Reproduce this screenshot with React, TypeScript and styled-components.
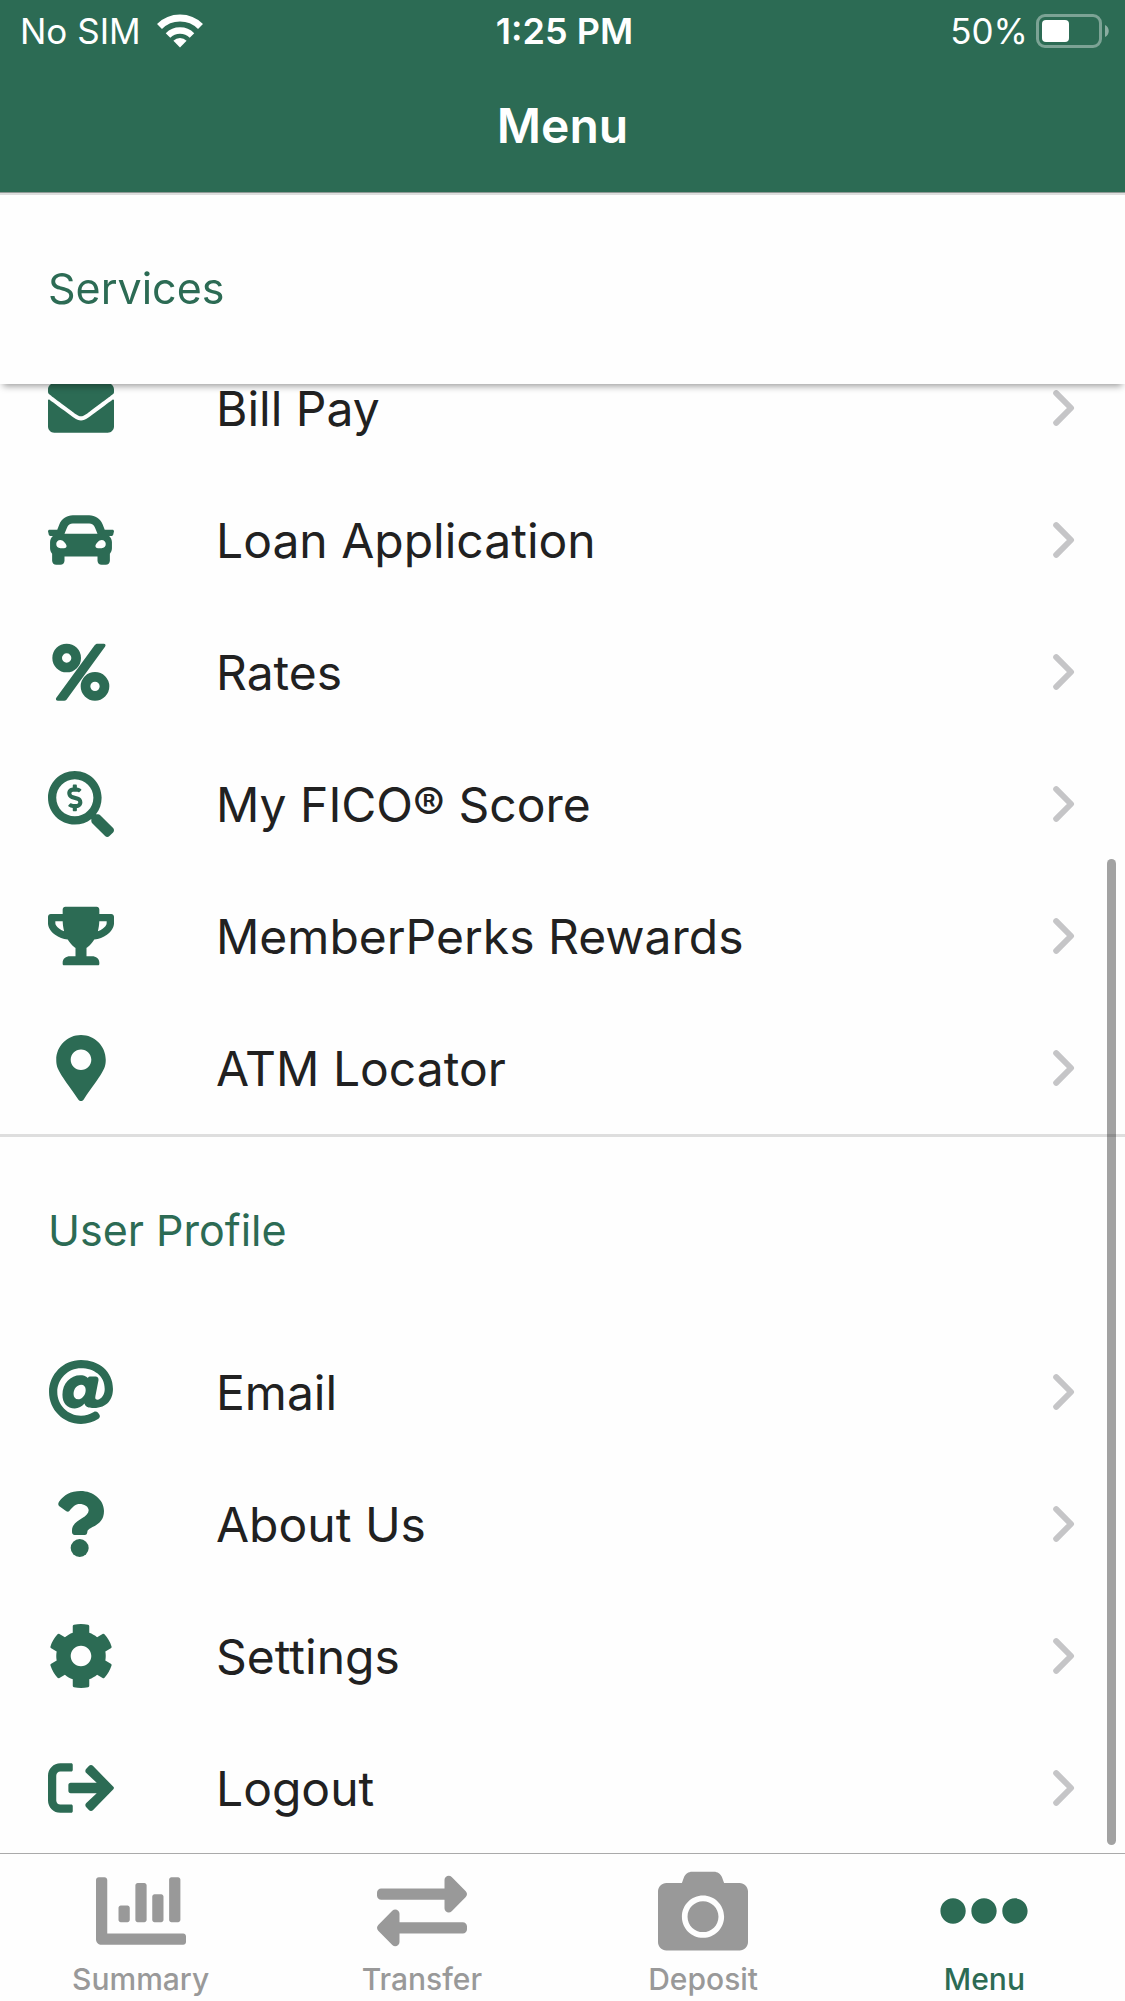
import React from 'react';
import styled, { createGlobalStyle } from 'styled-components';
import type { IconType } from 'react-icons';
import {
  FaAt,
  FaCamera,
  FaCar,
  FaChartBar,
  FaCog,
  FaEllipsisH,
  FaEnvelope,
  FaExchangeAlt,
  FaMapMarkerAlt,
  FaSearchDollar,
  FaTrophy,
} from 'react-icons/fa';

const green = '#2c6b54';
const ink = '#212121';
const paper = '#fefefe';
const muted = '#999999';

const GlobalStyle = createGlobalStyle`
  * { box-sizing: border-box; }
  body {
    margin: 0;
    background: ${paper};
    color: ${ink};
    font-family: Inter, "Liberation Sans", sans-serif;
  }
`;

const Screen = styled.div`
  display: flex;
  flex-direction: column;
  height: 100vh;
  overflow: hidden;
`;

const Header = styled.header`
  flex: none;
  background: ${green};
  color: #fff;
  border-bottom: 1px solid #8f9a96;
`;

const StatusBar = styled.div`
  display: grid;
  grid-template-columns: 1fr auto 1fr;
  align-items: center;
  height: 60px;
  padding: 0 16px 0 20px;
  font-size: 35px;
  line-height: 62px;
`;

const Carrier = styled.div`
  display: flex;
  align-items: center;
  gap: 16px;
`;

const Clock = styled.time`
  font-size: 36px;
  font-weight: 600;
`;

const Power = styled.div`
  display: flex;
  align-items: center;
  justify-content: flex-end;
  gap: 8px;
`;

const Title = styled.h1`
  margin: 0;
  height: 132px;
  font-size: 48px;
  line-height: 132px;
  font-weight: 600;
  text-align: center;
`;

const Content = styled.main`
  position: relative;
  flex: 1;
  min-height: 0;
  overflow: hidden;
  border-top: 2px solid #dddddd;
`;

const SectionTitle = styled.h2<{ $pinned?: boolean }>`
  position: ${(p) => (p.$pinned ? 'sticky' : 'static')};
  top: 0;
  z-index: 1;
  margin: 0;
  padding: 0 48px 2px;
  background: ${paper};
  color: ${green};
  font-size: 43px;
  font-weight: 400;
  line-height: 187px;
  box-shadow: ${(p) => (p.$pinned ? '0 5px 7px -3px rgba(0, 0, 0, 0.4)' : 'none')};
`;

const List = styled.ul<{ $scrolled?: boolean }>`
  margin: ${(p) => (p.$scrolled ? '-42px 0 0' : '0')};
  padding: 0;
  list-style: none;
`;

const Section = styled.section`
  & + & {
    border-top: 3px solid #dedede;
  }
`;

const Row = styled.a`
  display: flex;
  align-items: center;
  gap: 102px;
  height: 132px;
  padding: 0 50px 0 48px;
  color: inherit;
  font-size: 48px;
  line-height: 60px;
  text-decoration: none;
`;

const IconSlot = styled.span`
  display: flex;
  flex: none;
  justify-content: center;
  width: 66px;
  color: ${green};
`;

const RowLabel = styled.span`
  flex: 1;
  padding-top: 2px;
`;

const ScrollThumb = styled.div`
  position: absolute;
  right: 9px;
  bottom: 8px;
  z-index: 2;
  width: 9px;
  height: 59.5%;
  border-radius: 5px;
  background: rgba(0, 0, 0, 0.36);
`;

const TabBar = styled.nav`
  display: grid;
  flex: none;
  grid-template-columns: repeat(4, 1fr);
  height: 148px;
  border-top: 1px solid #aaaaaa;
`;

const Tab = styled.a<{ $active?: boolean }>`
  display: flex;
  flex-direction: column;
  align-items: center;
  padding-top: 12px;
  color: ${(p) => (p.$active ? green : muted)};
  font-size: 30px;
  font-weight: 500;
  line-height: 46px;
  text-decoration: none;
`;

const WifiGlyph = () => (
  <svg width="46" height="34" viewBox="0 0 46 34" fill="none" aria-hidden="true">
    <path d="M2.5 12.5a29 29 0 0 1 41 0" stroke="#fff" strokeWidth="7" />
    <path d="M11 21.5a17 17 0 0 1 24 0" stroke="#fff" strokeWidth="6.4" />
    <path d="M23 33.5l-6.6-6.8a9.4 9.4 0 0 1 13.2 0z" fill="#fff" />
  </svg>
);

const BatteryGlyph = () => (
  <svg width="73" height="34" viewBox="0 0 73 34" fill="none" aria-hidden="true">
    <rect x="1.5" y="1.5" width="63" height="31" rx="7.5" stroke="#fff" strokeOpacity="0.38" strokeWidth="3" />
    <rect x="6" y="6" width="27" height="22" rx="4" fill="#fff" />
    <path d="M69 11c5 2 5 10 0 12z" fill="#fff" fillOpacity="0.45" />
  </svg>
);

const ChevronGlyph = () => (
  <svg width="22" height="36" viewBox="0 0 22 36" fill="none" aria-hidden="true">
    <path d="M3.2 3.2L18 18L3.2 32.8" stroke="#c5c5c7" strokeWidth="6" strokeLinecap="round" strokeLinejoin="round" />
  </svg>
);

type GlyphProps = { size?: number | string };

const PercentGlyph = ({ size = 66 }: GlyphProps) => (
  <svg width={size} height={size} viewBox="0 0 198 198" fill="none" aria-hidden="true">
    <circle cx="56" cy="57" r="28.5" stroke="currentColor" strokeWidth="29" />
    <circle cx="141" cy="142" r="28.5" stroke="currentColor" strokeWidth="29" />
    <path d="M149 14h18c6 0 7 5 4 9L57 180c-2 3-4 5-8 5H30c-6 0-8-5-5-9L140 19c2-3 5-5 9-5z" fill="currentColor" />
  </svg>
);

const QuestionGlyph = ({ size = 66 }: GlyphProps) => (
  <svg width={size} height={size} viewBox="0 0 198 198" fill="currentColor" aria-hidden="true">
    <path d="M33 32C48 12 68 0 98 0c37 0 70 26 70 60 0 47-48 46-50 62 0 6-3 10-8 10H80c-5 0-8-4-8-9v-5c0-31 50-36 50-60 0-12-14-19-27-19s-19 7-31 21c-2 3-6 3-9 1L33 45c-3-3-3-8 0-13z" />
    <circle cx="95" cy="171" r="27" />
  </svg>
);

const LogoutGlyph = ({ size = 66 }: GlyphProps) => (
  <svg width={size} height={size} viewBox="0 0 512 512" fill="currentColor" aria-hidden="true">
    <path d="M96 448h84c7 0 12-5 12-12v-40c0-7-5-12-12-12H96c-18 0-32-14-32-32V160c0-18 14-32 32-32h84c7 0 12-5 12-12V76c0-7-5-12-12-12H96C43 64 0 107 0 160v192c0 53 43 96 96 96z" />
    <path d="M176 216H378L297 140c-10-9-10-24 0-33l20-22c9-10 24-10 33 0L507 247c6 6 6 12 0 18L350 427c-9 10-24 10-33 0l-20-22c-10-9-10-24 0-33l81-76H176c-11 0-18-7-18-18V234c0-11 7-18 18-18z" />
  </svg>
);

type Item = { label: string; icon: IconType | React.FC<GlyphProps> };

const services: Item[] = [
  { label: 'Bill Pay', icon: FaEnvelope },
  { label: 'Loan Application', icon: FaCar },
  { label: 'Rates', icon: PercentGlyph },
  { label: 'My FICO® Score', icon: FaSearchDollar },
  { label: 'MemberPerks Rewards', icon: FaTrophy },
  { label: 'ATM Locator', icon: FaMapMarkerAlt },
];

const profile: Item[] = [
  { label: 'Email', icon: FaAt },
  { label: 'About Us', icon: QuestionGlyph },
  { label: 'Settings', icon: FaCog },
  { label: 'Logout', icon: LogoutGlyph },
];

const tabs: { label: string; icon: IconType; active?: boolean }[] = [
  { label: 'Summary', icon: FaChartBar },
  { label: 'Transfer', icon: FaExchangeAlt },
  { label: 'Deposit', icon: FaCamera },
  { label: 'Menu', icon: FaEllipsisH, active: true },
];

const MenuRow = ({ label, icon: Icon }: Item) => (
  <li>
    <Row href="#">
      <IconSlot>
        <Icon size={66} />
      </IconSlot>
      <RowLabel>{label}</RowLabel>
      <ChevronGlyph />
    </Row>
  </li>
);

export default function App() {
  return (
    <Screen>
      <GlobalStyle />
      <Header>
        <StatusBar>
          <Carrier>
            No SIM
            <WifiGlyph />
          </Carrier>
          <Clock>1:25 PM</Clock>
          <Power>
            50%
            <BatteryGlyph />
          </Power>
        </StatusBar>
        <Title>Menu</Title>
      </Header>
      <Content>
        <Section>
          <SectionTitle $pinned>Services</SectionTitle>
          <List $scrolled>
            {services.map((item) => (
              <MenuRow key={item.label} {...item} />
            ))}
          </List>
        </Section>
        <Section>
          <SectionTitle>User Profile</SectionTitle>
          <List>
            {profile.map((item) => (
              <MenuRow key={item.label} {...item} />
            ))}
          </List>
        </Section>
        <ScrollThumb />
      </Content>
      <TabBar>
        {tabs.map(({ label, icon: Icon, active }) => (
          <Tab key={label} href="#" $active={active} aria-current={active ? 'page' : undefined}>
            <Icon size={90} />
            {label}
          </Tab>
        ))}
      </TabBar>
    </Screen>
  );
}
